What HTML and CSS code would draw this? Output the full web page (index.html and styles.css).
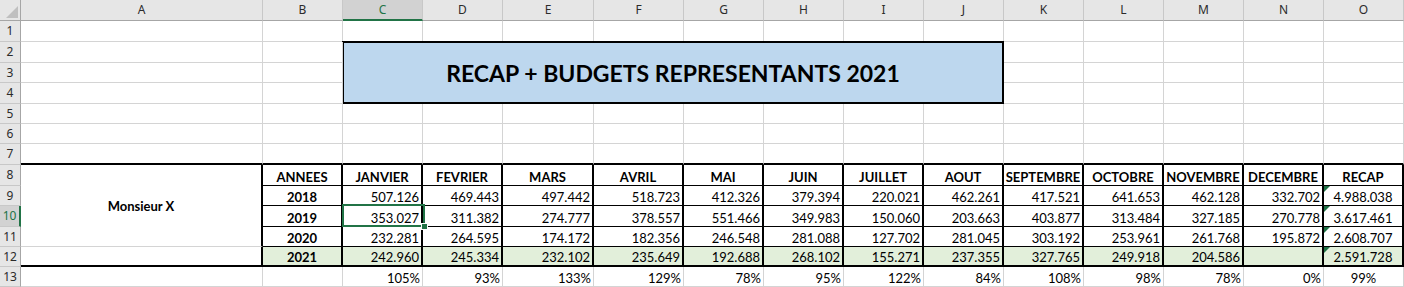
FILE: index.html
```html
<!DOCTYPE html>
<html lang="fr">
<head>
<meta charset="utf-8">
<title>RECAP + BUDGETS REPRESENTANTS 2021</title>
<link rel="stylesheet" href="styles.css">
</head>
<body>
<div class="sheet">
  <!-- column headers -->
  <div class="c corner"><svg class="tri" width="12" height="12" viewBox="0 0 12 12"><polygon points="12,0 12,12 0,12" fill="#BFBFBF"/></svg></div>
  <div class="c h">A</div><div class="c h">B</div><div class="c h hsel">C</div><div class="c h">D</div><div class="c h">E</div><div class="c h">F</div><div class="c h">G</div><div class="c h">H</div><div class="c h">I</div><div class="c h">J</div><div class="c h">K</div><div class="c h">L</div><div class="c h">M</div><div class="c h">N</div><div class="c h">O</div>

  <!-- row 1 -->
  <div class="c r">1</div>
  <div class="c"></div><div class="c"></div><div class="c"></div><div class="c"></div><div class="c"></div><div class="c"></div><div class="c"></div><div class="c"></div><div class="c"></div><div class="c"></div><div class="c"></div><div class="c"></div><div class="c"></div><div class="c"></div><div class="c"></div>

  <!-- title C2:J4 -->
  <div class="c title">RECAP + BUDGETS REPRESENTANTS 2021</div>

  <!-- row 2 -->
  <div class="c r">2</div>
  <div class="c"></div><div class="c"></div>
  <div class="c"></div><div class="c"></div><div class="c"></div><div class="c"></div><div class="c"></div>
  <!-- row 3 -->
  <div class="c r">3</div>
  <div class="c"></div><div class="c"></div>
  <div class="c"></div><div class="c"></div><div class="c"></div><div class="c"></div><div class="c"></div>
  <!-- row 4 -->
  <div class="c r">4</div>
  <div class="c"></div><div class="c"></div>
  <div class="c"></div><div class="c"></div><div class="c"></div><div class="c"></div><div class="c"></div>

  <!-- row 5 -->
  <div class="c r">5</div>
  <div class="c"></div><div class="c"></div><div class="c"></div><div class="c"></div><div class="c"></div><div class="c"></div><div class="c"></div><div class="c"></div><div class="c"></div><div class="c"></div><div class="c"></div><div class="c"></div><div class="c"></div><div class="c"></div><div class="c"></div>
  <!-- row 6 -->
  <div class="c r">6</div>
  <div class="c"></div><div class="c"></div><div class="c"></div><div class="c"></div><div class="c"></div><div class="c"></div><div class="c"></div><div class="c"></div><div class="c"></div><div class="c"></div><div class="c"></div><div class="c"></div><div class="c"></div><div class="c"></div><div class="c"></div>
  <!-- row 7 -->
  <div class="c r">7</div>
  <div class="c top"></div><div class="c top"></div><div class="c top"></div><div class="c top"></div><div class="c top"></div><div class="c top"></div><div class="c top"></div><div class="c top"></div><div class="c top"></div><div class="c top"></div><div class="c top"></div><div class="c top"></div><div class="c top"></div><div class="c top"></div><div class="c top"></div>

  <!-- A8:A11 -->
  <div class="c mx">Monsieur X</div>

  <!-- row 8 -->
  <div class="c r">8</div>
  <div class="c t bold ctr">ANNEES</div>
  <div class="c t bold ctr">JANVIER</div>
  <div class="c t bold ctr">FEVRIER</div>
  <div class="c t bold ctr">MARS</div>
  <div class="c t bold ctr">AVRIL</div>
  <div class="c t bold ctr">MAI</div>
  <div class="c t bold ctr">JUIN</div>
  <div class="c t bold ctr">JUILLET</div>
  <div class="c t bold ctr">AOUT</div>
  <div class="c t bold ctr">SEPTEMBRE</div>
  <div class="c t bold ctr">OCTOBRE</div>
  <div class="c t bold ctr">NOVEMBRE</div>
  <div class="c t bold ctr">DECEMBRE</div>
  <div class="c t bold ctr">RECAP</div>

  <!-- row 9 -->
  <div class="c r">9</div>
  <div class="c t bold ctr">2018</div>
  <div class="c t num">507.126</div>
  <div class="c t num">469.443</div>
  <div class="c t num">497.442</div>
  <div class="c t num">518.723</div>
  <div class="c t num">412.326</div>
  <div class="c t num">379.394</div>
  <div class="c t num">220.021</div>
  <div class="c t num">462.261</div>
  <div class="c t num">417.521</div>
  <div class="c t num">641.653</div>
  <div class="c t num">462.128</div>
  <div class="c t num">332.702</div>
  <div class="c t ctr err">4.988.038</div>

  <!-- row 10 -->
  <div class="c r rsel">10</div>
  <div class="c t bold ctr">2019</div>
  <div class="c t num sel">353.027</div>
  <div class="c t num">311.382</div>
  <div class="c t num">274.777</div>
  <div class="c t num">378.557</div>
  <div class="c t num">551.466</div>
  <div class="c t num">349.983</div>
  <div class="c t num">150.060</div>
  <div class="c t num">203.663</div>
  <div class="c t num">403.877</div>
  <div class="c t num">313.484</div>
  <div class="c t num">327.185</div>
  <div class="c t num">270.778</div>
  <div class="c t ctr err">3.617.461</div>

  <!-- row 11 -->
  <div class="c r">11</div>
  <div class="c t bold ctr">2020</div>
  <div class="c t num">232.281</div>
  <div class="c t num">264.595</div>
  <div class="c t num">174.172</div>
  <div class="c t num">182.356</div>
  <div class="c t num">246.548</div>
  <div class="c t num">281.088</div>
  <div class="c t num">127.702</div>
  <div class="c t num">281.045</div>
  <div class="c t num">303.192</div>
  <div class="c t num">253.961</div>
  <div class="c t num">261.768</div>
  <div class="c t num">195.872</div>
  <div class="c t ctr err">2.608.707</div>

  <!-- row 12 -->
  <div class="c r">12</div>
  <div class="c a12"></div>
  <div class="c t last g bold ctr">2021</div>
  <div class="c t last g num">242.960</div>
  <div class="c t last g num">245.334</div>
  <div class="c t last g num">232.102</div>
  <div class="c t last g num">235.649</div>
  <div class="c t last g num">192.688</div>
  <div class="c t last g num">268.102</div>
  <div class="c t last g num">155.271</div>
  <div class="c t last g num">237.355</div>
  <div class="c t last g num">327.765</div>
  <div class="c t last g num">249.918</div>
  <div class="c t last g num">204.586</div>
  <div class="c t last g num"></div>
  <div class="c t last g ctr err">2.591.728</div>

  <!-- row 13 -->
  <div class="c r">13</div>
  <div class="c"></div>
  <div class="c"></div>
  <div class="c num">105%</div>
  <div class="c num">93%</div>
  <div class="c num">133%</div>
  <div class="c num">129%</div>
  <div class="c num">78%</div>
  <div class="c num">95%</div>
  <div class="c num">122%</div>
  <div class="c num">84%</div>
  <div class="c num">108%</div>
  <div class="c num">98%</div>
  <div class="c num">78%</div>
  <div class="c num">0%</div>
  <div class="c ctr">99%</div>
</div>
</body>
</html>
```

FILE: styles.css
```css
html, body {
  margin: 0;
  padding: 0;
  background: #ffffff;
}

.sheet {
  display: grid;
  grid-template-columns: 21px 242px 80px 80px 80px 91px 90px repeat(9, 80px);
  grid-template-rows: 21px 21px 21px 20px 21px 20px 20px 21px 21px 20px 21px 20px 20px 20px;
  width: 1404px;
  height: 287px;
  overflow: hidden;
  font-family: Lato, "Liberation Sans", sans-serif;
  font-size: 13px;
  color: #000000;
}

.c {
  box-sizing: border-box;
  min-width: 0;
  display: flex;
  align-items: flex-end;
  line-height: 16px;
  white-space: nowrap;
  border-right: 1px solid #D4D4D4;
  border-bottom: 1px solid #D4D4D4;
}

/* headers */
.h {
  background: #E6E6E6;
  border-right: 1px solid #C8C8C8;
  border-bottom: 1px solid #A6A6A6;
  align-items: center;
  justify-content: center;
  font-family: "Noto Sans", "DejaVu Sans", sans-serif;
  font-size: 12px;
  color: #2b2b2b;
}

.corner {
  background: #E6E6E6;
  border-right: 1px solid #A6A6A6;
  border-bottom: 1px solid #A6A6A6;
  align-items: flex-end;
  justify-content: flex-end;
  padding: 0 2px 2px 0;
}

.tri {
  display: block;
}

.hsel {
  background: #D2D2D2;
  color: #217346;
  border-bottom: 2px solid #217346;
}

.r {
  background: #E6E6E6;
  border-right: 1px solid #A6A6A6;
  border-bottom: 1px solid #C8C8C8;
  align-items: center;
  justify-content: center;
  font-family: "Noto Sans", "DejaVu Sans", sans-serif;
  font-size: 12px;
  color: #2b2b2b;
}

.rsel {
  background: #D2D2D2;
  color: #217346;
  border-right: 2px solid #217346;
}

/* title box */
.title {
  grid-column: 4 / 12;
  grid-row: 3 / 6;
  margin: -1px 0 0 -1px;
  background: #BDD7EE;
  border: 2px solid #000000;
  align-items: center;
  justify-content: center;
  font-size: 23px;
  font-weight: 700;
  line-height: 26px;
}

/* table */
.top {
  border-bottom: 2px solid #000000;
}

.mx {
  grid-column: 2;
  grid-row: 9 / 13;
  border-right: 2px solid #000000;
  align-items: center;
  justify-content: center;
  font-weight: 700;
}

.a12 {
  border-right: 2px solid #000000;
  border-bottom: 2px solid #000000;
}

.t {
  border-right: 2px solid #000000;
  border-bottom: 1px solid #000000;
}

.last {
  border-bottom: 2px solid #000000;
}

.g {
  background: #E2EFDA;
}

.bold {
  font-weight: 700;
}

.ctr {
  justify-content: center;
}

.num {
  justify-content: flex-end;
  padding-right: 2px;
}

/* error indicator */
.err {
  position: relative;
}

.err::before {
  content: "";
  position: absolute;
  left: 0;
  top: 0;
  width: 0;
  height: 0;
  border-top: 6px solid #1E7145;
  border-right: 6px solid transparent;
}

/* selected cell */
.sel {
  position: relative;
  z-index: 2;
}

.sel::after {
  content: "";
  position: absolute;
  left: -1px;
  top: -2px;
  right: -4px;
  bottom: -1px;
  box-sizing: border-box;
  border: 2px solid #217346;
}

.sel::before {
  content: "";
  position: absolute;
  right: -6px;
  bottom: -3px;
  width: 5px;
  height: 5px;
  box-sizing: border-box;
  background: #217346;
  outline: 1px solid #ffffff;
  z-index: 3;
}
```
